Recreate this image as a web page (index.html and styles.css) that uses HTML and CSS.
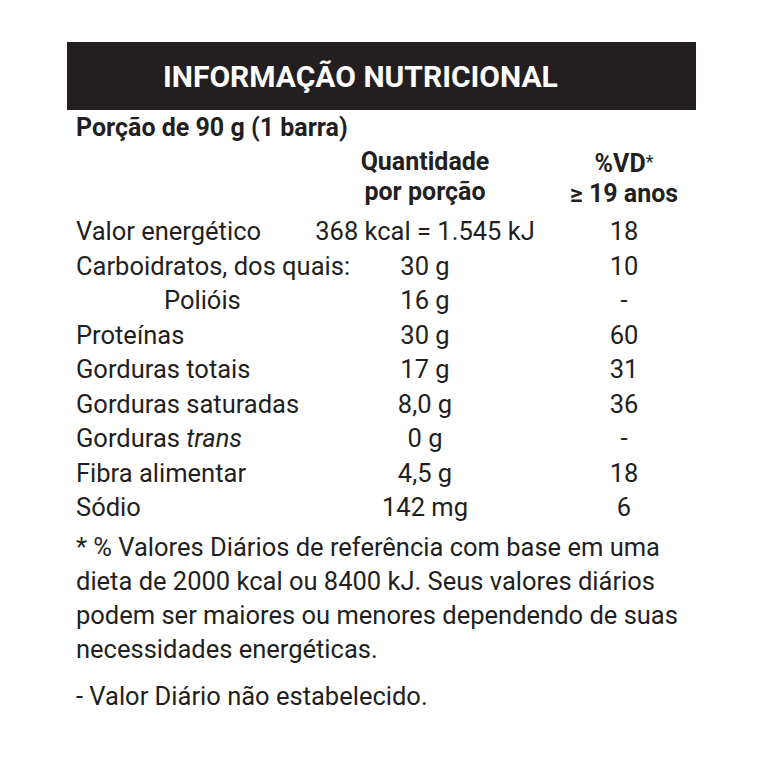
FILE: index.html
```html
<!DOCTYPE html>
<html lang="pt-BR">
<head>
<meta charset="utf-8">
<title>Informação Nutricional</title>
<link rel="stylesheet" href="styles.css">
</head>
<body>
<div class="label">
  <div class="bar">INFORMAÇÃO NUTRICIONAL</div>
  <div class="serving">Porção de 90 g (1 barra)</div>
  <div class="table">
    <div class="head"></div>
    <div class="head center">Quantidade<br>por porção</div>
    <div class="head center">%VD<span class="ast">*</span><br>≥ 19 anos</div>

    <div class="cell">Valor energético</div>
    <div class="cell center">368 kcal = 1.545 kJ</div>
    <div class="cell center">18</div>

    <div class="cell">Carboidratos, dos quais:</div>
    <div class="cell center">30 g</div>
    <div class="cell center">10</div>

    <div class="cell sub">Polióis</div>
    <div class="cell center">16 g</div>
    <div class="cell center">-</div>

    <div class="cell">Proteínas</div>
    <div class="cell center">30 g</div>
    <div class="cell center">60</div>

    <div class="cell">Gorduras totais</div>
    <div class="cell center">17 g</div>
    <div class="cell center">31</div>

    <div class="cell">Gorduras saturadas</div>
    <div class="cell center">8,0 g</div>
    <div class="cell center">36</div>

    <div class="cell">Gorduras <em>trans</em></div>
    <div class="cell center">0 g</div>
    <div class="cell center">-</div>

    <div class="cell">Fibra alimentar</div>
    <div class="cell center">4,5 g</div>
    <div class="cell center">18</div>

    <div class="cell">Sódio</div>
    <div class="cell center">142 mg</div>
    <div class="cell center">6</div>
  </div>
  <p class="note">* % Valores Diários de referência com base em uma dieta de 2000 kcal ou 8400 kJ. Seus valores diários podem ser maiores ou menores dependendo de suas necessidades energéticas.</p>
  <p class="note last">- Valor Diário não estabelecido.</p>
</div>
</body>
</html>
```

FILE: styles.css
```css
html, body {
  margin: 0;
  padding: 0;
  background: #ffffff;
}

body {
  font-family: Roboto, "Liberation Sans", sans-serif;
  color: #231f20;
}

.label {
  margin: 42px 0 0 67px;
  width: 629px;
}

.bar {
  height: 68px;
  background: #231f20;
  color: #ffffff;
  display: flex;
  align-items: center;
  padding-left: 96px;
  font-weight: 700;
  font-size: 30px;
}

.serving {
  padding-left: 9px;
  font-weight: 700;
  font-size: 25px;
  line-height: 36px;
}

.table {
  display: grid;
  grid-template-columns: 231px 236px 162px;
  padding-left: 9px;
  margin-top: 1px;
  font-size: 25.5px;
}

.head {
  font-weight: 700;
  font-size: 25px;
  line-height: 30px;
  margin-bottom: 5px;
}

.ast {
  font-weight: 400;
  font-size: 18px;
  vertical-align: 4px;
}

.cell {
  line-height: 34.5px;
  white-space: nowrap;
}

.center {
  text-align: center;
}

.sub {
  padding-left: 88px;
}

.cell em {
  font-style: italic;
}

.note {
  margin: 5px 0 0;
  padding-left: 9px;
  padding-right: 0;
  font-size: 25.5px;
  line-height: 34px;
}

.note.last {
  margin-top: 13px;
}
```
